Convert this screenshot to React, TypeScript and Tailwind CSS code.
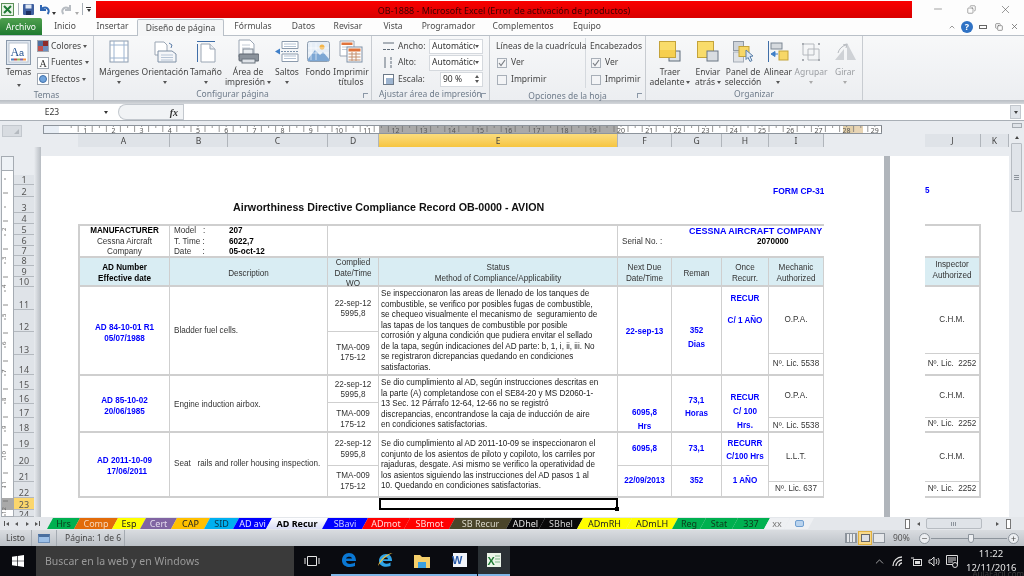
import React from 'react';
import { Minus, X, Copy, ChevronUp } from 'lucide-react';

const ui = "[font-family:'Noto_Sans',sans-serif]";
// first column is 2px short because the row's left border takes those pixels
const sheetCols = 'grid-cols-[90px_58px_100px_51px_239px_54px_50px_47px_55px]';

const Caret = ({ className = 'border-t-[#555]' }: { className?: string }) => (
  <span className={`inline-block h-0 w-0 border-x-[2.5px] border-t-[3px] border-x-transparent ${className}`} />
);

// ribbon icons
const ThemesIcon = () => (
  <svg width="25" height="25" viewBox="0 0 25 25">
    <rect x="0.5" y="0.5" width="24" height="24" fill="#dfe7f0" stroke="#8a99ab" />
    <rect x="3" y="3" width="19" height="19" fill="#fff" stroke="#b8c2ce" />
    <text x="4.5" y="16" fontSize="12" fontFamily="Liberation Serif" fill="#1f4e8c">A</text>
    <text x="13" y="16" fontSize="9" fontFamily="Liberation Sans" fill="#1f4e8c">a</text>
    <rect x="5" y="18.5" width="3" height="2" fill="#4f81bd" />
    <rect x="8" y="18.5" width="3" height="2" fill="#c0504d" />
    <rect x="11" y="18.5" width="3" height="2" fill="#9bbb59" />
    <rect x="14" y="18.5" width="3" height="2" fill="#8064a2" />
    <rect x="17" y="18.5" width="3" height="2" fill="#f79646" />
  </svg>
);
const MarginsIcon = () => (
  <svg width="20" height="23" viewBox="0 0 20 23">
    <rect x="1" y="1" width="18" height="21" fill="#fff" stroke="#8c9bae" />
    <path d="M5 1v21M15 1v21M1 5h18M1 18h18" stroke="#9db4d0" fill="none" />
  </svg>
);
const OrientationIcon = () => (
  <svg width="23" height="22" viewBox="0 0 23 22">
    <path d="M1 1h9l3 3v10H1z" fill="#fff" stroke="#9aa5b3" />
    <path d="M4 10h14l4 3v8H4z" fill="#f4f6f9" stroke="#7f90a5" />
    <path d="M7 14h12M7 16.5h12M7 19h12" stroke="#b6c4d6" />
    <path d="M15 2l3 2-1 3" stroke="#5d7ea8" fill="none" />
  </svg>
);
const SizeIcon = () => (
  <svg width="20" height="22" viewBox="0 0 20 22">
    <path d="M5 3h9l5 5v13H5z" fill="#fff" stroke="#9aa5b3" />
    <path d="M1 0.5h18M1.5 3v18" stroke="#3f6ea8" fill="none" />
    <path d="M14 3v5h5" fill="#e8ecf1" stroke="#9aa5b3" />
  </svg>
);
const PrintAreaIcon = () => (
  <svg width="22" height="25" viewBox="0 0 22 25">
    <path d="M2 1h11l4 4v13H2z" fill="#fff" stroke="#9aa5b3" />
    <path d="M5 6h8M5 9h8" stroke="#c4ccd6" />
    <rect x="6" y="10" width="10" height="6" fill="#e9edf1" stroke="#808a96" />
    <rect x="2" y="15" width="20" height="7" rx="1" fill="#8b939c" stroke="#5d656e" />
    <rect x="5" y="20" width="13" height="4" fill="#dfe3e8" stroke="#6d7680" />
  </svg>
);
const BreaksIcon = () => (
  <svg width="24" height="21" viewBox="0 0 24 21">
    <path d="M7 0.5h16v7H7zM7 13h16v7.5H7z" fill="#fff" stroke="#8b9aac" />
    <path d="M9 3h12M9 5.5h12M9 15h12M9 17.5h12" stroke="#b5c3d4" />
    <path d="M0 10.5L5 7.5V13.5z" fill="#3f7fc8" />
    <path d="M6 10.5h18" stroke="#7d93ad" strokeDasharray="2 1" />
  </svg>
);
const BackgroundIcon = () => (
  <svg width="23" height="21" viewBox="0 0 23 21">
    <rect x="0.5" y="0.5" width="22" height="20" rx="2" fill="#e6eef7" stroke="#8f9fb1" />
    <circle cx="15" cy="6" r="2.5" fill="#f3b54a" />
    <path d="M1 18L8 9l5 5 3-3 6 7v2H1z" fill="#7da7d4" />
    <path d="M4 2v17M9 2v17M1 7h21M1 12h21" stroke="#fff" strokeOpacity="0.6" />
  </svg>
);
const PrintTitlesIcon = () => (
  <svg width="24" height="23" viewBox="0 0 24 23">
    <path d="M1 1h14v15H1z" fill="#fff" stroke="#9aa5b3" />
    <rect x="2.5" y="2.5" width="11" height="2.5" fill="#e0743c" />
    <path d="M3 7h10M3 9.5h10" stroke="#c3ccd7" />
    <rect x="8" y="7" width="15" height="15" fill="#fbfcfd" stroke="#7f90a5" />
    <rect x="9.5" y="8.5" width="12" height="3" fill="#e0743c" />
    <path d="M9.5 14h12M9.5 17h12M9.5 20h12M13 12v9M17 12v9" stroke="#c38f6f" />
  </svg>
);
const BringIcon = () => (
  <svg width="22" height="21" viewBox="0 0 22 21">
    <rect x="10" y="10" width="11" height="10" fill="#dfe3e7" stroke="#5f6c7b" />
    <rect x="0.5" y="0.5" width="16" height="16" fill="#f9dc6b" stroke="#c4a33a" />
    <rect x="1" y="9" width="15" height="7" fill="#f6cf4f" />
  </svg>
);
const SendIcon = () => (
  <svg width="22" height="21" viewBox="0 0 22 21">
    <rect x="0.5" y="0.5" width="16" height="16" fill="#f9dc6b" stroke="#c4a33a" />
    <rect x="10" y="10" width="11" height="10" fill="#d9dde2" stroke="#6a7684" />
  </svg>
);
const PaneIcon = () => (
  <svg width="21" height="22" viewBox="0 0 21 22">
    <rect x="0.5" y="0.5" width="10" height="9" fill="#cfd4da" stroke="#9099a4" />
    <rect x="0.5" y="11" width="10" height="10" fill="#dfe2e6" stroke="#a5adb7" />
    <rect x="6" y="5.5" width="10" height="10" fill="#f7d766" stroke="#c4a33a" />
    <path d="M13 9l7 6-3 .5 2 4-2 1-2-4-2 2z" fill="#dbe7f5" stroke="#5a7fa8" />
  </svg>
);
const AlignIcon = () => (
  <svg width="21" height="21" viewBox="0 0 21 21">
    <path d="M0.5 0v21" stroke="#3f6ea8" />
    <rect x="3" y="2" width="11" height="6" fill="#d6dade" stroke="#7d8793" />
    <rect x="11" y="10" width="9" height="9" fill="#f7d766" stroke="#c4a33a" />
    <path d="M3 13l4-2.5v5zM6 13h4" fill="#3f7fc8" stroke="#3f7fc8" />
  </svg>
);
const GroupIcon = () => (
  <svg width="20" height="20" viewBox="0 0 20 20">
    <path d="M2 2h11v11H2zM7 7h11v11H7z" fill="none" stroke="#b4b8bd" />
    <path d="M1 1h2v2H1zM17 1h2v2h-2zM1 17h2v2H1zM17 17h2v2h-2z" fill="#a8acb2" />
  </svg>
);
const RotateIcon = () => (
  <svg width="23" height="19" viewBox="0 0 23 19">
    <path d="M1 18l9-11v11zM13 1l9 17h-9z" fill="#cfd2d6" />
    <path d="M4 11c1-4 4-7 8-8M9 3l4-1-1 4" fill="none" stroke="#b5b9be" />
  </svg>
);

const BigButton = ({ icon, lines, w, caret = true, muted = false }: { icon: React.ReactNode; lines: string[]; w: string; caret?: boolean; muted?: boolean }) => (
  <div className={`${w} flex flex-col items-center shrink-0 leading-[10px] text-[8.5px] ${muted ? 'text-[#9a9da1]' : 'text-[#444]'}`}>
    <div className="h-[27px] flex items-center justify-center">{icon}</div>
    <div className="mt-[2px] h-[10px] whitespace-nowrap">{lines[0]}</div>
    <div className="h-[10px] whitespace-nowrap flex items-center gap-[2px]">
      {lines[1]}
      {caret && <Caret className={muted ? 'border-t-[#aaa]' : 'border-t-[#555]'} />}
    </div>
  </div>
);

const Launcher = () => (
  <span className="absolute right-[3px] bottom-[2px] h-[5px] w-[5px] border-l border-t border-[#8a97a6]" />
);

const Group = ({ label, w, launcher, children }: { label: string; w: string; launcher?: boolean; children: React.ReactNode }) => (
  <div className={`${w} relative flex flex-col shrink-0 border-r border-[#c8ccd1]`}>
    <div className="flex-1 flex">{children}</div>
    <div className="h-[12px] text-center text-[8.5px] leading-[11px] text-[#6e7b8a] whitespace-nowrap">{label}</div>
    {launcher && <Launcher />}
  </div>
);

const SmallRow = ({ color, label }: { color: React.ReactNode; label: string }) => (
  <div className="h-[16.5px] flex items-center gap-[2px] text-[8.5px] text-[#444]">
    {color}
    <span>{label}</span>
    <Caret />
  </div>
);

const Check = ({ on = false }: { on?: boolean }) => (
  <span className="h-[10px] w-[10px] border border-[#a8afb8] bg-[#f3f4f6] flex items-center justify-center shrink-0">
    {on && (
      <svg width="8" height="8" viewBox="0 0 8 8">
        <path d="M1 4l2 2.5L7 1" fill="none" stroke="#7b7f85" strokeWidth="1.2" />
      </svg>
    )}
  </span>
);

const FieldRow = ({ icon, label, value, inset }: { icon: React.ReactNode; label: string; value: string; inset?: boolean }) => (
  <div className="h-[16.5px] flex items-center text-[8.5px] text-[#444]">
    <span className="w-[15px] flex justify-start">{icon}</span>
    <span className="w-[31px]">{label}</span>
    <div className={`${inset ? 'ml-[11px] w-[43px]' : 'w-[54px]'} h-[15.5px] bg-white border border-[#d5d9de] flex items-center pl-[2px] pr-[3px] justify-between`}>
      <span className="overflow-hidden whitespace-nowrap text-[#333]">{value}</span>
      {inset ? (
        <span className="flex flex-col gap-[2px]">
          <Caret className="border-t-[#555] rotate-180" />
          <Caret />
        </span>
      ) : (
        <Caret />
      )}
    </div>
  </div>
);

const TitleBar = () => (
  <div className="h-[18px] flex items-center bg-[#fdfdfd]">
    <div className="w-[96px] flex items-center shrink-0 pl-[1px]">
      <svg width="13" height="13" viewBox="0 0 13 13">
        <rect x="0.5" y="0.5" width="12" height="12" fill="#e8f3e6" stroke="#5c8f58" />
        <path d="M3 3l7 7M10 3l-7 7" stroke="#1f7a34" strokeWidth="2" />
      </svg>
      <span className="ml-[4px] h-[12px] border-l border-[#a9b0b8]" />
      <svg className="ml-[4px]" width="11" height="11" viewBox="0 0 11 11">
        <rect width="11" height="11" rx="1" fill="#3f5f9f" />
        <rect x="2.5" y="0.5" width="6" height="4" fill="#dfe7f3" />
        <rect x="3" y="7" width="5" height="4" fill="#1f2f5f" />
      </svg>
      <svg className="ml-[5px]" width="11" height="11" viewBox="0 0 11 11">
        <path d="M2 1v5h5M2.5 5.5C4 3 8 2.5 9.5 6c.5 1.500 0 3-1 4" fill="none" stroke="#2f66b3" strokeWidth="2" />
      </svg>
      <span className="ml-[2px]"><Caret className="border-t-[#333]" /></span>
      <svg className="ml-[5px]" width="11" height="11" viewBox="0 0 11 11">
        <path d="M9 1v5H4M8.500 5.500C7 3 3 2.500 1.500 6c-.5 1.500 0 3 1 4" fill="none" stroke="#b7bcc2" strokeWidth="2" />
      </svg>
      <span className="ml-[3px]"><Caret className="border-t-[#aaa]" /></span>
      <span className="ml-[3px] h-[12px] border-l border-[#a9b0b8]" />
      <span className="ml-[3px] flex flex-col items-center gap-[1px]">
        <span className="h-px w-[5px] bg-[#333]" />
        <Caret className="border-t-[#333]" />
      </span>
    </div>
    <div className={`w-[816px] h-[17px] shrink-0 bg-linear-to-b from-[#fa0000] to-[#d80000] text-center text-[9px] leading-[19px] text-[#3a0000] ${ui}`}>
      OB-1888 - Microsoft Excel (Error de activación de productos)
    </div>
    <div className="flex-1 flex items-center pl-[20px] gap-[21px] text-[#444]">
      <Minus size={12} strokeWidth={1} />
      <Copy size={9} strokeWidth={1.2} className="-scale-x-100 mx-[2px]" />
      <X size={13} strokeWidth={1} />
    </div>
  </div>
);

const tabs = [
  { label: 'Inicio', w: 'w-[46px]' },
  { label: 'Insertar', w: 'w-[49px]' },
  { label: 'Diseño de página', w: 'w-[87px]', active: true },
  { label: 'Fórmulas', w: 'w-[58px]' },
  { label: 'Datos', w: 'w-[43px]' },
  { label: 'Revisar', w: 'w-[46px]' },
  { label: 'Vista', w: 'w-[44px]' },
  { label: 'Programador', w: 'w-[67px]' },
  { label: 'Complementos', w: 'w-[82px]' },
  { label: 'Equipo', w: 'w-[46px]' },
];

const TabStrip = () => (
  <div className={`h-[18px] flex items-end bg-[#fdfdfd] border-b border-[#b9c0c8] text-[8.5px] text-[#4a4a4a] ${ui}`}>
    <div className="w-[42px] h-[17px] shrink-0 bg-linear-to-b from-[#4fa04f] to-[#1d7a2f] text-white text-center leading-[17px] rounded-t-[2px]">Archivo</div>
    {tabs.map(t => (
      <div
        key={t.label}
        className={`${t.w} h-[17px] shrink-0 text-center leading-[16px] whitespace-nowrap ${t.active ? 'bg-[#f5f6f7] border border-b-0 border-[#b9c0c8] relative top-px rounded-t-[2px]' : ''}`}
      >
        {t.label}
      </div>
    ))}
    <div className="flex-1 h-[17px] flex items-center justify-end gap-[5px] pr-[5px]">
      <ChevronUp size={8} className="text-[#666]" />
      <span className="h-[12px] w-[12px] rounded-full bg-[#2f72c4] text-white text-[9px] font-bold leading-[12px] text-center">?</span>
      <span className="h-[4px] w-[8px] border border-[#666] ml-[1px]" />
      <Copy size={8} className="text-[#666] ml-[3px]" />
      <X size={9} className="text-[#666] ml-[2px]" />
    </div>
  </div>
);

const Ribbon = () => (
  <div className={`h-[64px] flex bg-linear-to-b from-[#f7f8f9] to-[#eceef1] ${ui}`}>
    <Group label="Temas" w="w-[94px]">
      <div className="w-[37px] flex flex-col items-center pt-[4px] text-[8.5px] text-[#444] leading-[10px]">
        <ThemesIcon />
        <span className="mt-[2px]">Temas</span>
        <span className="mt-[2px]"><Caret /></span>
      </div>
      <div className="flex flex-col pt-[2px]">
        <SmallRow label="Colores" color={<span className="h-[12px] w-[12px] grid grid-cols-2 border border-[#a0a7b0]"><span className="bg-[#4f6f9f]" /><span className="bg-[#8e2a2a]" /><span className="bg-[#c0504d]" /><span className="bg-[#6c8ebf]" /></span>} />
        <SmallRow label="Fuentes" color={<span className="h-[12px] w-[12px] border border-[#a0a7b0] bg-white text-[10px] leading-[11px] text-center text-[#333] [font-family:'Liberation_Serif',serif]">A</span>} />
        <SmallRow label="Efectos" color={<span className="h-[12px] w-[12px] border border-[#a0a7b0] bg-white flex items-center justify-center"><span className="h-[8px] w-[8px] rounded-full bg-[#6fa3dc] border border-[#3f6ea8]" /></span>} />
      </div>
    </Group>
    <Group label="Configurar página" w="w-[278px]" launcher>
      <div className="flex pl-[2px] pt-[2px]">
        <BigButton w="w-[46px]" icon={<MarginsIcon />} lines={['Márgenes', '']} />
        <BigButton w="w-[46px]" icon={<OrientationIcon />} lines={['Orientación', '']} />
        <BigButton w="w-[36px]" icon={<SizeIcon />} lines={['Tamaño', '']} />
        <BigButton w="w-[48px]" icon={<PrintAreaIcon />} lines={['Área de', 'impresión']} />
        <BigButton w="w-[30px]" icon={<BreaksIcon />} lines={['Saltos', '']} />
        <BigButton w="w-[32px]" icon={<BackgroundIcon />} lines={['Fondo', '']} caret={false} />
        <BigButton w="w-[34px]" icon={<PrintTitlesIcon />} lines={['Imprimir', 'títulos']} caret={false} />
      </div>
    </Group>
    <Group label="Ajustar área de impresión" w="w-[118px]" launcher>
      <div className="flex flex-col pl-[11px] pt-[2px]">
        <FieldRow label="Ancho:" value="Automático" icon={<svg width="11" height="11" viewBox="0 0 11 11"><path d="M0 2h11M0 8.500h3M8 8.500h3M4 8.500h3" stroke="#5f6b78" fill="none" /></svg>} />
        <FieldRow label="Alto:" value="Automático" icon={<svg width="11" height="11" viewBox="0 0 11 11"><path d="M2 0v11M8 0v3M8 4v3M8 8v3" stroke="#5f6b78" fill="none" /></svg>} />
        <FieldRow label="Escala:" value="90 %" inset icon={<svg width="11" height="11" viewBox="0 0 11 11"><rect x="0.5" y="0.5" width="10" height="10" fill="#fff" stroke="#6d7a89" /><rect x="3" y="4" width="7" height="6" fill="#9db4d0" /></svg>} />
      </div>
    </Group>
    <Group label="Opciones de la hoja" w="w-[156px]" launcher>
      <div className="flex pt-[2px] text-[8.5px] text-[#444]">
        <div className="w-[96px] pl-[6px] border-r border-[#d5d9de] mb-[2px]">
          <div className="h-[16px] leading-[16px] whitespace-nowrap">Líneas de la cuadrícula</div>
          <div className="h-[17px] flex items-center gap-[4px] pl-px"><Check on />Ver</div>
          <div className="h-[17px] flex items-center gap-[4px] pl-px"><Check />Imprimir</div>
        </div>
        <div className="pl-[4px]">
          <div className="h-[16px] leading-[16px] whitespace-nowrap">Encabezados</div>
          <div className="h-[17px] flex items-center gap-[4px] pl-px"><Check on />Ver</div>
          <div className="h-[17px] flex items-center gap-[4px] pl-px"><Check />Imprimir</div>
        </div>
      </div>
    </Group>
    <Group label="Organizar" w="w-[217px]">
      <div className="flex pl-[2px] pt-[2px]">
        <BigButton w="w-[44px]" icon={<BringIcon />} lines={['Traer', 'adelante']} />
        <BigButton w="w-[32px]" icon={<SendIcon />} lines={['Enviar', 'atrás']} />
        <BigButton w="w-[38px]" icon={<PaneIcon />} lines={['Panel de', 'selección']} caret={false} />
        <BigButton w="w-[32px]" icon={<AlignIcon />} lines={['Alinear', '']} />
        <BigButton w="w-[34px]" icon={<GroupIcon />} lines={['Agrupar', '']} muted />
        <BigButton w="w-[34px]" icon={<RotateIcon />} lines={['Girar', '']} muted />
      </div>
    </Group>
  </div>
);

const FormulaBar = () => (
  <div className={`h-[17px] flex items-center bg-white border-b border-[#a9afb6] ${ui}`}>
    <div className="w-[118px] h-[16px] flex items-center shrink-0 relative">
      <span className="w-[104px] text-center text-[8.5px] text-[#333]">E23</span>
      <Caret className="border-t-[#333]" />
    </div>
    <div className="w-[65px] h-[16px] shrink-0 border-l border-y border-[#c3c8ce] rounded-l-[8px] bg-[#f1f3f5] flex items-center justify-end pr-[5px]">
      <span className="[font-family:'Liberation_Serif',serif] italic font-bold text-[10px] text-[#333]">fx</span>
    </div>
    <div className="flex-1 h-[16px] border-l border-[#c3c8ce]" />
    <div className="w-[11px] h-[14px] mr-[3px] bg-[#e1e5ea] border border-[#c3c8ce] flex items-center justify-center">
      <Caret className="border-t-[#444]" />
    </div>
  </div>
);

const rulerNums = Array.from({ length: 29 }, (_, i) => i + 1);
const TopRuler = () => (
  <svg width="839" height="9" viewBox="0 0 839 9" className="block">
    <rect width="839" height="9" fill="#fff" />
    <rect width="16" height="9" fill="#e8eef5" />
    <rect x="336" width="239" height="9" fill="#a9a9a9" />
    <rect x="800" width="10" height="9" fill="#e2cfa9" />
    <rect x="810" width="10" height="9" fill="#e8d5b5" />
    <rect x="0.5" y="0.500" width="838" height="8" fill="none" stroke="#8d949c" />
    {rulerNums.map(n => {
      const x = 14 + 28.2 * n;
      return (
        <g key={n}>
          <path d={`M${x - 7} 1v6M${x + 7} 1v6M${x - 14} 1v2M${x} 1v1`} stroke="#6f6f6f" strokeWidth="0.7" fill="none" />
          <text x={x} y="7.500" fontSize="7" textAnchor="middle" fontFamily="Noto Sans" fill="#555">{n}</text>
        </g>
      );
    })}
  </svg>
);

const colHeads = [
  { l: 'A', w: 'w-[92px]' },
  { l: 'B', w: 'w-[58px]' },
  { l: 'C', w: 'w-[100px]' },
  { l: 'D', w: 'w-[51px]' },
  { l: 'E', w: 'w-[239px]', sel: true },
  { l: 'F', w: 'w-[54px]' },
  { l: 'G', w: 'w-[50px]' },
  { l: 'H', w: 'w-[47px]' },
  { l: 'I', w: 'w-[55px]' },
];

const ColHead = ({ l, w, sel }: { l: string; w: string; sel?: boolean }) => (
  <div className={`${w} h-[13px] shrink-0 text-center text-[8.5px] leading-[13px] border-r border-[#b0b5bb] ${sel ? 'bg-linear-to-b from-[#fbdc7b] to-[#f6c53f] text-[#444]' : 'bg-[#dfe3e8] text-[#444]'}`}>
    {l}
  </div>
);

const rowEdges = [175, 185, 197, 213, 224, 235, 246, 256, 266, 277, 287, 310, 332, 355, 375, 390, 404, 418, 433, 449, 466, 482, 498, 510, 517];

const RowHeaders = () => (
  <div className="w-[20px] pt-[28px] shrink-0">
    {rowEdges.slice(0, -1).map((y, i) => (
      <div
        key={y}
        style={{ height: rowEdges[i + 1] - y }}
        className={`flex ${i === 23 ? 'items-start' : 'items-end'} justify-center overflow-hidden border-b border-[#b4b9bf] text-[9px] leading-[9px] text-[#555] ${i === 22 ? 'bg-[#fbd66c]' : 'bg-[#dfe3e8]'} ${ui}`}
      >
        {i + 1}
      </div>
    ))}
  </div>
);

const vNums = [
  [2, 229], [3, 258], [4, 286], [5, 315], [6, 343], [7, 371], [8, 399], [9, 427], [10, 456], [11, 486], [12, 512],
];
const SideRuler = () => (
  <svg width="13" height="370" viewBox="0 0 13 370" className="shrink-0 ml-[1px]">
    <rect x="0.5" y="9.500" width="12" height="360" fill="#fff" stroke="#a5abb2" />
    <rect x="0.5" y="9.500" width="12" height="14" fill="#eef2f6" stroke="#a5abb2" />
    <rect x="1" y="351" width="12" height="12" fill="#a9a9a9" />
    {Array.from({ length: 26 }, (_, i) => (
      <path key={i} d={`M${i % 2 ? 2 : 3} ${32 + i * 14}h${i % 2 ? 5 : 2}`} stroke="#6f6f6f" strokeWidth="0.8" />
    ))}
    {vNums.map(([n, y]) => (
      <text key={n} x="3" y={y - 147} fontSize="6" transform={`rotate(-90 5 ${y - 147})`} fontFamily="Noto Sans" fill="#666">{n}</text>
    ))}
  </svg>
);

const B = ({ children, className = '' }: { children: React.ReactNode; className?: string }) => (
  <div className={`font-bold text-[#0000ff] text-center whitespace-pre ${className}`}>{children}</div>
);

const Lines = ({ lines }: { lines: string[] }) => (
  <div className="pl-[2px] leading-[10.5px] text-[#222] whitespace-pre">
    {lines.map(l => <div key={l}>{l}</div>)}
  </div>
);

const Dcell = ({ h1, h2, a, b, className = '' }: { h1: string; h2: string; a: string[]; b: string[]; className?: string }) => (
  <div className="flex flex-col border-r border-[#cfcfcf] text-center leading-[10.5px]">
    <div className={`${h1} ${className} border-b border-[#cfcfcf] flex flex-col justify-center`}>{a.map(t => <div key={t}>{t}</div>)}</div>
    <div className={`${h2} ${className} flex flex-col justify-center`}>{b.map(t => <div key={t}>{t}</div>)}</div>
  </div>
);

const Split = ({ h1, h2, a, b }: { h1: string; h2: string; a: React.ReactNode; b: React.ReactNode }) => (
  <div className="flex flex-col border-r border-[#cfcfcf] text-center">
    <div className={`${h1} border-b border-[#cfcfcf] flex items-center justify-center`}>{a}</div>
    <div className={`${h2} flex items-center justify-center`}>{b}</div>
  </div>
);

const cell = 'border-r border-[#cfcfcf] flex items-center justify-center text-center';

const statusA = [
  'Se inspeccionaron las areas de llenado de los tanques de',
  'combustible, se verifico por posibles fugas de combustible,',
  'se chequeo visualmente el mecanismo de  seguramiento de',
  'las tapas de los tanques de combustible por posible',
  'corrosión y alguna condición que pudiera envitar el sellado',
  'de la tapa, según indicaciones del AD parte: b, 1, i, ii, iii. No',
  'se registraron dicrepancias quedando en condiciones',
  'satisfactorias.',
];
const statusB = [
  'Se dio cumplimiento al AD, según instrucciones descritas en',
  'la parte (A) completandose con el SE84-20 y MS D2060-1-',
  '13 Sec. 12 Párrafo 12-64, 12-66 no se registró',
  'discrepancias, encontrandose la caja de inducción de aire',
  'en condiciones satisfactorias.',
];
const statusC = [
  'Se dio cumplimiento al AD 2011-10-09 se inspeccionaron el',
  'conjunto de los asientos de piloto y copiloto, los carriles por',
  'rajaduras, desgate. Asi mismo se verifico la operatividad de',
  'los asientos siguiendo las instrucciones del AD pasos 1 al',
  '10. Quedando en condiciones satisfactorias.',
];

const RecordTable = () => (
  <div className="w-[746px] text-[8.15px] text-[#333] [font-family:'Liberation_Sans',sans-serif]">
    <div className={`grid ${sheetCols} h-[32px] border-t-2 border-l-2 border-[#cfcfcf]`}>
      <div className={`${cell} flex-col leading-[10.5px] pb-[2px]`}>
        <div className="font-bold text-black">MANUFACTURER</div>
        <div>Cessna Aircraft</div>
        <div>Company</div>
      </div>
      <div className="col-span-2 border-r border-[#cfcfcf] pl-[4px] pb-[2px] flex flex-col justify-center leading-[10.5px]">
        <div className="flex"><span className="w-[55px] whitespace-pre">Model   :</span><b className="text-black">207</b></div>
        <div className="flex"><span className="w-[55px]">T. Time :</span><b className="text-black">6022,7</b></div>
        <div className="flex"><span className="w-[55px] whitespace-pre">Date     :</span><b className="text-black">05-oct-12</b></div>
      </div>
      <div className="col-span-2 border-r border-[#cfcfcf]" />
      <div className="col-span-4 flex flex-col leading-[10.5px] overflow-hidden">
        <div className="text-[9px] font-bold text-[#0000ff] pl-[71px] whitespace-nowrap">CESSNA AIRCRAFT COMPANY</div>
        <div className="flex pl-[4px] whitespace-pre"><span className="w-[135px]">Serial No. :</span><b className="text-black">2070000</b></div>
      </div>
    </div>
    <div className={`grid ${sheetCols} h-[31px] bg-[#d9edf3] border-y-2 border-l-2 border-[#cfcfcf] leading-[10.5px]`}>
      <div className={`${cell} flex-col font-bold text-black pb-[2px]`}><div>AD Number</div><div>Effective date</div></div>
      <div className={`${cell} col-span-2 pb-[2px]`}>Description</div>
      <div className={`${cell} flex-col pb-[2px]`}><div>Complied</div><div>Date/Time</div><div>WO</div></div>
      <div className={`${cell} flex-col pb-[2px]`}><div>Status</div><div>Method of Compliance/Applicability</div></div>
      <div className={`${cell} flex-col pb-[2px]`}><div>Next Due</div><div>Date/Time</div></div>
      <div className={`${cell} pb-[2px]`}>Reman</div>
      <div className={`${cell} flex-col pb-[2px]`}><div>Once</div><div>Recurr.</div></div>
      <div className={`${cell} flex-col pb-[2px]`}><div>Mechanic</div><div>Authorized</div></div>
    </div>

    <div className={`grid ${sheetCols} h-[89px] border-b-2 border-l-2 border-[#cfcfcf]`}>
      <div className={`${cell} flex-col leading-[11px] pt-[4px]`}><B>AD 84-10-01 R1</B><B>05/07/1988</B></div>
      <div className="col-span-2 border-r border-[#cfcfcf] flex items-center pl-[4px] pt-[2px]">Bladder fuel cells.</div>
      <Dcell h1="h-[45px]" h2="flex-1" a={['22-sep-12', '5995,8']} b={['TMA-009', '175-12']} />
      <div className="border-r border-[#cfcfcf] pt-[2px]"><Lines lines={statusA} /></div>
      <div className={`${cell} pt-[3px]`}><B>22-sep-13</B></div>
      <div className={`${cell} flex-col leading-[14px] pt-[14px]`}><B>352</B><B>Dias</B></div>
      <div className="border-r border-[#cfcfcf] pt-[1px] leading-[22px]"><B>RECUR</B><B>C/ 1 AÑO</B></div>
      <Split h1="h-[67px]" h2="flex-1" a="O.P.A." b="Nº. Lic. 5538" />
    </div>

    <div className={`grid ${sheetCols} h-[57px] border-b-2 border-l-2 border-[#cfcfcf]`}>
      <div className={`${cell} flex-col leading-[11px] pt-[2px]`}><B>AD 85-10-02</B><B>20/06/1985</B></div>
      <div className="col-span-2 border-r border-[#cfcfcf] flex items-center pl-[4px]">Engine induction airbox.</div>
      <Dcell h1="h-[27px]" h2="flex-1" className="pt-[2px]" a={['22-sep-12', '5995,8']} b={['TMA-009', '175-12']} />
      <div className="border-r border-[#cfcfcf] pt-[2px]"><Lines lines={statusB} /></div>
      <div className={`${cell} flex-col pt-[30px] leading-[14px]`}><B>6095,8</B><B>Hrs</B></div>
      <div className={`${cell} flex-col leading-[13px] pt-[3px]`}><B>73,1</B><B>Horas</B></div>
      <div className="border-r border-[#cfcfcf] pt-[15px] leading-[14px]"><B>RECUR</B><B>C/ 100</B><B>Hrs.</B></div>
      <Split h1="h-[42px]" h2="flex-1" a="O.P.A." b="Nº. Lic. 5538" />
    </div>

    <div className={`grid ${sheetCols} h-[65px] border-b-2 border-l-2 border-[#cfcfcf]`}>
      <div className={`${cell} flex-col leading-[11px] pt-[3px]`}><B>AD 2011-10-09</B><B className="pl-[5px]">17/06/2011</B></div>
      <div className="col-span-2 border-r border-[#cfcfcf] flex items-center pl-[4px] whitespace-pre">Seat   rails and roller housing inspection.</div>
      <Dcell h1="h-[33px]" h2="flex-1" className="pt-[1px]" a={['22-sep-12', '5995,8']} b={['TMA-009', '175-12']} />
      <div className="border-r border-[#cfcfcf] pt-[6px]"><Lines lines={statusC} /></div>
      <Split h1="h-[33px]" h2="flex-1" a={<B>6095,8</B>} b={<B>22/09/2013</B>} />
      <Split h1="h-[33px]" h2="flex-1" a={<B>73,1</B>} b={<B>352</B>} />
      <Split h1="h-[33px]" h2="flex-1" a={<div className="leading-[13px] pt-[2px]"><B>RECURR</B><B>C/100 Hrs</B></div>} b={<B>1 AÑO</B>} />
      <Split h1="h-[49px]" h2="flex-1" a="L.L.T." b="Nº. Lic. 637" />
    </div>

    {/* selected cell E23 */}
    <div className={`grid ${sheetCols} h-[12px] pl-[2px]`}>
      <div className="col-start-5 border-2 border-black relative">
        <span className="absolute -right-[3px] -bottom-[3px] h-[4px] w-[4px] bg-black" />
      </div>
    </div>
  </div>
);

const Page2 = () => (
  <div className="w-[119px] bg-white pl-[35px] pr-[28px] shrink-0 text-[8.15px] text-[#333] [font-family:'Liberation_Sans',sans-serif]">
    <div className="h-[28px]" />
    <div className="h-[10px] font-bold text-[#0000ff] leading-[14px]">5</div>
    <div className="h-[30px]" />
    <div className="h-[32px] border-t-2 border-r-2 border-[#cfcfcf]" />
    <div className="h-[31px] bg-[#d9edf3] border-y-2 border-r-2 border-[#cfcfcf] flex flex-col items-center justify-center leading-[10.5px] pb-[2px]">
      <div>Inspector</div>
      <div>Authorized</div>
    </div>
    <div className="h-[89px] border-b-2 border-r-2 border-[#cfcfcf] flex flex-col text-center">
      <div className="h-[67px] border-b border-[#cfcfcf] flex items-center justify-center">C.H.M.</div>
      <div className="flex-1 flex items-center justify-center whitespace-pre">Nº. Lic.  2252</div>
    </div>
    <div className="h-[57px] border-b-2 border-r-2 border-[#cfcfcf] flex flex-col text-center">
      <div className="h-[42px] border-b border-[#cfcfcf] flex items-center justify-center">C.H.M.</div>
      <div className="flex-1 flex items-center justify-center whitespace-pre">Nº. Lic.  2252</div>
    </div>
    <div className="h-[65px] border-b-2 border-r-2 border-[#cfcfcf] flex flex-col text-center">
      <div className="h-[49px] border-b border-[#cfcfcf] flex items-center justify-center">C.H.M.</div>
      <div className="flex-1 flex items-center justify-center whitespace-pre">Nº. Lic.  2252</div>
    </div>
  </div>
);

const Page1 = () => (
  <div className="w-[843px] h-full shrink-0 bg-white pl-[37px] overflow-hidden">
    <div className="h-[28px]" />
    <div className="w-[746px] h-[10px] pl-[695px] overflow-hidden font-bold text-[8.5px] leading-[14px] text-[#0000ff] whitespace-nowrap [font-family:'Liberation_Sans',sans-serif]">
      FORM CP-315
    </div>
    <div className="h-[30px] pl-[155px] pt-[6px] font-bold text-[10.7px] leading-[14px] text-[#111] whitespace-nowrap [font-family:'Liberation_Sans',sans-serif]">
      Airworthiness Directive Compliance Record OB-0000 - AVION
    </div>
    <RecordTable />
  </div>
);

const SheetArea = () => (
  <div className="flex-1 min-w-0 flex flex-col bg-[#e9ecf0]">
    <div className="h-[26px] relative shrink-0">
      <div className="absolute left-[2px] top-[4px] h-[12px] w-[20px] bg-[#d8dce1] border border-[#c3c8ce] flex items-end justify-end p-[2px]">
        <span className="h-0 w-0 border-l-[5px] border-b-[5px] border-l-transparent border-b-[#b4b9bf]" />
      </div>
      <div className="pl-[43px] pt-[4px]"><TopRuler /></div>
      <div className={`flex pl-[78px] ${ui}`}>
        {colHeads.map(c => <ColHead key={c.l} {...c} />)}
        <div className="w-[101px]" />
        <ColHead l="J" w="w-[56px]" />
        <ColHead l="K" w="w-[28px]" />
      </div>
    </div>
    <div className="h-[370px] flex overflow-hidden">
      <div className="w-[41px] shrink-0 flex bg-[#e9ecf0]">
        <SideRuler />
        <RowHeaders />
        <div className="flex-1 bg-linear-to-r from-[#e9ecf0] to-[#b7bcc2]" />
      </div>
      <div className="flex-1 pt-[9px] flex overflow-hidden">
        <Page1 />
        <div className="w-[6px] h-full shrink-0 bg-[#b0b5bb]" />
        <Page2 />
      </div>
    </div>
  </div>
);

const VScroll = () => (
  <div className="w-[15px] shrink-0 bg-[#e9ecf0] flex flex-col items-center pt-[2px]">
    <div className="h-[5px] w-[10px] bg-[#dfe3e8] border border-[#a5abb2]" />
    <div className="h-[10px] flex items-center mt-[4px]"><Caret className="border-t-[#444] rotate-180" /></div>
    <div className="mt-px h-[69px] w-[11px] bg-[#e0e4e9] border border-[#b7bcc2] rounded-[1px] flex flex-col items-center justify-center gap-px">
      <span className="h-px w-[5px] bg-[#8d949c]" />
      <span className="h-px w-[5px] bg-[#8d949c]" />
      <span className="h-px w-[5px] bg-[#8d949c]" />
    </div>
    <div className="flex-1" />
    <div className="h-[12px]"><Caret className="border-t-[#666]" /></div>
  </div>
);

const sheetTabs = [
  { l: 'Hrs', w: 'w-[33px]', c: 'bg-[#00b050] text-[#0c3a1c]' },
  { l: 'Comp', w: 'w-[44px]', c: 'bg-[#e26b0a] text-[#f6d8bd]' },
  { l: 'Esp', w: 'w-[34px]', c: 'bg-[#ffff00] text-[#222]' },
  { l: 'Cert', w: 'w-[37px]', c: 'bg-[#8064a2] text-[#e2d9ec]' },
  { l: 'CAP', w: 'w-[39px]', c: 'bg-[#ffc000] text-[#222]' },
  { l: 'SID', w: 'w-[35px]', c: 'bg-[#00b0f0] text-[#0b3448]' },
  { l: 'AD avi', w: 'w-[39px]', c: 'bg-[#0000ff] text-[#dfe0ff]' },
  { l: 'AD Recur', w: 'w-[62px]', c: 'bg-linear-to-b from-white to-[#d9dcf6] text-black font-bold' },
  { l: 'SBavi', w: 'w-[46px]', c: 'bg-[#0000ff] text-[#c9ccff]' },
  { l: 'ADmot', w: 'w-[48px]', c: 'bg-[#ff0000] text-[#ffdcdc]' },
  { l: 'SBmot', w: 'w-[51px]', c: 'bg-[#ff0000] text-[#ffdcdc]' },
  { l: 'SB Recur', w: 'w-[63px]', c: 'bg-[#4a452a] text-[#d8d6c8]' },
  { l: 'ADhel', w: 'w-[39px]', c: 'bg-[#0a0a0a] text-[#e4e4e4]' },
  { l: 'SBhel', w: 'w-[44px]', c: 'bg-[#0a0a0a] text-[#d0d0d0]' },
  { l: 'ADmRH', w: 'w-[55px]', c: 'bg-[#ffff00] text-[#222]' },
  { l: 'ADmLH', w: 'w-[52px]', c: 'bg-[#ffff00] text-[#222]' },
  { l: 'Reg', w: 'w-[34px]', c: 'bg-[#00b050] text-[#0c3a1c]' },
  { l: 'Stat', w: 'w-[38px]', c: 'bg-[#00b050] text-[#0c3a1c]' },
  { l: '337', w: 'w-[38px]', c: 'bg-[#00b050] text-[#0c3a1c]' },
  { l: 'xx', w: 'w-[26px]', c: 'bg-[#eef0f3] text-[#777]' },
];

const NavArrow = ({ dir, bar }: { dir: 'l' | 'r'; bar?: boolean }) => (
  <span className="w-[10.500px] flex items-center justify-center gap-px">
    {bar && dir === 'l' && <span className="h-[5px] w-px bg-[#555]" />}
    <span className={`h-0 w-0 border-y-[2.5px] border-y-transparent ${dir === 'l' ? 'border-r-[3px] border-r-[#555]' : 'border-l-[3px] border-l-[#555]'}`} />
    {bar && dir === 'r' && <span className="h-[5px] w-px bg-[#555]" />}
  </span>
);

const SheetTabs = () => (
  <div className={`h-[13px] flex items-start bg-[#e4e7eb] text-[9px] leading-[11px] ${ui}`}>
    <div className="w-[47px] h-full flex items-center shrink-0 pl-px">
      <NavArrow dir="l" bar />
      <NavArrow dir="l" />
      <NavArrow dir="r" />
      <NavArrow dir="r" bar />
    </div>
    {sheetTabs.map(t => (
      <div
        key={t.l}
        className={`${t.w} ${t.c} h-[11px] mt-px -mr-[6px] shrink-0 text-center whitespace-nowrap [clip-path:polygon(6px_0,100%_0,calc(100%-6px)_100%,0_100%)]`}
      >
        {t.l}
      </div>
    ))}
    <div className="w-[30px] h-[11px] mt-px shrink-0 bg-[#eef0f3] flex items-center justify-center [clip-path:polygon(6px_0,100%_0,calc(100%-6px)_100%,0_100%)]">
      <span className="h-[7px] w-[9px] rounded-[2px] bg-[#b9d3ee] border border-[#6f9ed0]" />
    </div>
    <div className="w-[91px] shrink-0" />
    <div className="flex-1 h-full flex items-center">
      <span className="h-[10px] w-[5px] border border-[#777] bg-white" />
      <span className="ml-[3px]"><NavArrow dir="l" /></span>
      <span className="ml-[2px] h-[11px] w-[56px] bg-[#dfe3e8] border border-[#b7bcc2] rounded-[2px] flex items-center justify-center gap-px">
        <span className="h-[4px] w-px bg-[#8d949c]" />
        <span className="h-[4px] w-px bg-[#8d949c]" />
        <span className="h-[4px] w-px bg-[#8d949c]" />
      </span>
      <span className="ml-[11px]"><NavArrow dir="r" /></span>
      <span className="ml-[3px] h-[10px] w-[5px] border border-[#777] bg-white" />
    </div>
  </div>
);

const StatusBar = () => (
  <div className={`h-[16px] flex items-center bg-linear-to-b from-[#d9dce0] to-[#bcc1c7] text-[8.5px] text-[#444] ${ui}`}>
    <span className="w-[32px] pl-[6px] border-r border-[#a5abb2] h-full leading-[16px]">Listo</span>
    <span className="w-[25px] border-r border-[#a5abb2] h-full flex items-center justify-center">
      <span className="h-[9px] w-[12px] bg-[#9cc0e8] border border-[#6d8fb8] border-t-[3px] border-t-[#4a6f9f]" />
    </span>
    <span className="w-[68px] pl-[8px] border-r border-[#a5abb2] h-full leading-[16px] whitespace-nowrap">Página: 1 de 6</span>
    <div className="flex-1" />
    <span className="h-[10px] w-[12px] border border-[#8d949c] bg-[repeating-linear-gradient(90deg,#8d949c_0,#8d949c_1px,#e6e8eb_1px,#e6e8eb_3px)]" />
    <span className="ml-px h-[14px] w-[14px] border border-[#e0b040] bg-[#f8d98a] flex items-center justify-center">
      <span className="h-[8px] w-[9px] border border-[#666] bg-[#dcdfe3]" />
    </span>
    <span className="h-[10px] w-[12px] border border-[#8d949c] bg-[#e6e8eb] ml-px" />
    <span className="ml-[8px] w-[26px] text-[#555]">90%</span>
    <span className="h-[11px] w-[11px] rounded-full border border-[#8d949c] bg-[#eceef1] flex items-center justify-center"><Minus size={7} strokeWidth={2} /></span>
    <span className="w-[76px] h-px bg-[#8d949c] relative mx-px">
      <span className="absolute left-[37px] -top-[4px] h-[9px] w-[6px] bg-[#eceef1] border border-[#8d949c] rounded-b-[3px]" />
    </span>
    <span className="h-[11px] w-[11px] mr-[5px] rounded-full border border-[#8d949c] bg-[#eceef1] flex items-center justify-center text-[9px] leading-[9px]">+</span>
  </div>
);

const TaskIcon = ({ children, w = 'w-[36px]', underline = false, active = false }: { children?: React.ReactNode; w?: string; underline?: boolean; active?: boolean }) => (
  <div className={`${w} h-full shrink-0 flex items-center justify-center ${underline ? 'border-b-2 border-[#7fb6e6]' : ''} ${active ? 'bg-[#2b3135]' : ''}`}>
    {children}
  </div>
);

const Taskbar = () => (
  <div className={`h-[30px] flex bg-[#0a0b10] relative ${ui}`}>
    <div className="w-[36px] shrink-0 flex items-center justify-center">
      <svg width="12" height="12" viewBox="0 0 12 12"><path d="M0 1.700l5-.7v4.700H0zM5.700 .9L12 0v5.700H5.700zM0 6.300h5V11l-5-.7zM5.700 6.300H12V12l-6.300-.9z" fill="#fff" /></svg>
    </div>
    <div className="w-[258px] shrink-0 bg-[#3a3a3a] text-[#9a9a9a] text-[10.5px] leading-[30px] pl-[9px] whitespace-nowrap">Buscar en la web y en Windows</div>
    <TaskIcon>
      <svg width="16" height="12" viewBox="0 0 16 12"><path d="M3.500 1.500h9v9h-9zM1 3v6M15 3v6" fill="none" stroke="#e6e6e6" /></svg>
    </TaskIcon>
    <TaskIcon w="w-[1px]" />
    <TaskIcon underline>
      <svg width="16" height="16" viewBox="0 0 16 16"><path d="M1 8.500C1 4 4 1 8 1c4.500 0 7 3 7 8H5c.3 3 4.500 4 9 1.500v3.500C8 16.500 1 14.500 1 8.500zM5 6.500h6C11 4 5.500 4 5 6.500z" fill="#0a78d4" /></svg>
    </TaskIcon>
    <TaskIcon underline>
      <svg width="17" height="17" viewBox="0 0 17 17"><path d="M2 9C2 5 5 2 9 2c4 0 6 3 6 7H6c.3 3 4 3.500 7.500 1.500V14C8 16 2 14 2 9zM6 7.200h5C11 4.500 6.500 4.500 6 7.200z" fill="#2fa4e7" /><path d="M1 14C2 8 10 1 16 1c-2 0-10 5-15 13z" fill="#f0c040" /></svg>
    </TaskIcon>
    <TaskIcon w="w-[38px]" underline>
      <svg width="16" height="15" viewBox="0 0 16 15"><path d="M0 2h6l2 2h8v11H0z" fill="#f5cf6b" /><path d="M4 9h8v6H4z" fill="#3aa0e0" /></svg>
    </TaskIcon>
    <TaskIcon underline>
      <svg width="16" height="16" viewBox="0 0 16 16"><rect x="2" y="1" width="14" height="14" fill="#f2f5fa" /><text x="1" y="12" fontSize="11" fontWeight="bold" fontFamily="Liberation Sans" fill="#2a5caa">W</text></svg>
    </TaskIcon>
    <TaskIcon w="w-[1px]" />
    <TaskIcon w="w-[32px]" underline active>
      <svg width="16" height="16" viewBox="0 0 16 16"><rect x="1" y="1" width="14" height="14" fill="#eaf4e8" /><path d="M9 4h5M9 7h5M9 10h5" stroke="#7fb58a" /><text x="1.500" y="12.500" fontSize="11" fontWeight="bold" fontFamily="Liberation Sans" fill="#1f7a34">X</text></svg>
    </TaskIcon>
    <div className="flex-1" />
    <div className="flex items-center gap-[6px] pr-[8px] text-[#eee]">
      <ChevronUp size={13} strokeWidth={1.2} />
      <svg width="12" height="11" viewBox="0 0 12 11"><path d="M1 10c0-5 4-9 9-9M4 10c0-3 3-6 6-6M7 10c0-1.500 1.500-3 3-3" fill="none" stroke="#ddd" strokeWidth="1.300" /></svg>
      <svg width="12" height="9" viewBox="0 0 12 9"><rect x="3.500" y="2.500" width="8" height="6" fill="none" stroke="#ddd" /><rect x="5" y="4" width="5" height="3" fill="#ddd" /><path d="M1 1h3" stroke="#ddd" /></svg>
      <svg width="12" height="11" viewBox="0 0 12 11"><path d="M1 4h2l3-3v9L3 7H1z" fill="none" stroke="#ddd" /><path d="M8 3c1 1.500 1 3.500 0 5M10 2c1.500 2 1.500 5 0 7" fill="none" stroke="#ddd" /></svg>
      <svg width="12" height="13" viewBox="0 0 12 13"><path d="M.5.500h11v9h-11zM2 3h8M2 5h8M2 7h5" fill="none" stroke="#ddd" /><circle cx="9" cy="10" r="2.500" fill="#0a0b10" stroke="#ddd" /></svg>
      <div className="w-[50px] ml-[2px] text-center text-[9.500px] text-[#e6e6e6] leading-[14px]">
        <div>11:22</div>
        <div className="whitespace-nowrap">12/11/2016</div>
      </div>
    </div>
    <div className="absolute right-0 bottom-[-3px] text-[8px] leading-[10px] text-[#3c3c3c]">AulaFacil.com</div>
  </div>
);

const App: React.FC = () => {
  return (
    <div className="w-[1024px] h-[576px] flex flex-col overflow-hidden blur-[0.35px] bg-[#e9ecf0]">
      <TitleBar />
      <TabStrip />
      <Ribbon />
      <div className="h-[4px] bg-linear-to-b from-[#b8bdc3] to-[#d5d8dc]" />
      <FormulaBar />
      <div className="flex h-[396px]">
        <SheetArea />
        <VScroll />
      </div>
      <SheetTabs />
      <StatusBar />
      <Taskbar />
    </div>
  );
};

export default App;
